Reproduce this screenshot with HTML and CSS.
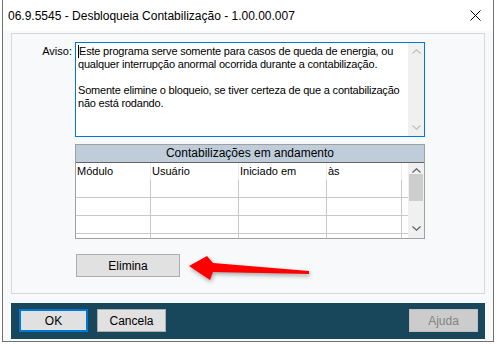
FILE: index.html
```html
<!DOCTYPE html>
<html>

<head>
	<meta charset="utf-8">
	<link rel="stylesheet" href="styles.css">
</head>

<body>

	<div class="window">
		<div class="titlebar">
			<span class="title">06.9.5545 - Desbloqueia Contabilização - 1.00.00.007</span>
			<svg class="close" width="11" height="11" viewBox="0 0 11 11">
				<path d="M0.5 0.5L10.5 10.5M10.5 0.5L0.5 10.5" />
			</svg>
		</div>

		<div class="client">
			<div class="group">
				<div class="aviso-row">
					<label class="aviso-label">Aviso:</label>
					<div class="memo">
						<div class="memo-text">
							<p><span class="caret"></span>Este programa serve somente para casos de queda de energia, ou qualquer interrupção anormal ocorrida durante a contabilização.</p>
							<p>Somente elimine o bloqueio, se tiver certeza de que a contabilização não está rodando.</p>
						</div>
						<div class="vscroll vscroll-off">
							<svg class="chev" width="9" height="5" viewBox="0 0 9 5"><path d="M0.5 4.5L4.5 0.8L8.5 4.5" /></svg>
							<svg class="chev" width="9" height="5" viewBox="0 0 9 5"><path d="M0.5 0.5L4.5 4.2L8.5 0.5" /></svg>
						</div>
					</div>
				</div>

				<div class="grid">
					<div class="grid-caption">Contabilizações em andamento</div>
					<div class="grid-body">
						<div class="grid-rows">
							<div class="grid-row grid-head">
								<div class="cell">Módulo</div>
								<div class="cell">Usuário</div>
								<div class="cell">Iniciado em</div>
								<div class="cell">às</div>
							</div>
							<div class="grid-row">
								<div class="cell"></div>
								<div class="cell"></div>
								<div class="cell"></div>
								<div class="cell"></div>
							</div>
							<div class="grid-row">
								<div class="cell"></div>
								<div class="cell"></div>
								<div class="cell"></div>
								<div class="cell"></div>
							</div>
							<div class="grid-row">
								<div class="cell"></div>
								<div class="cell"></div>
								<div class="cell"></div>
								<div class="cell"></div>
							</div>
							<div class="grid-row">
								<div class="cell"></div>
								<div class="cell"></div>
								<div class="cell"></div>
								<div class="cell"></div>
							</div>
						</div>
						<div class="vscroll">
							<svg class="chev" width="9" height="5" viewBox="0 0 9 5"><path d="M0.5 4.5L4.5 0.8L8.5 4.5" /></svg>
							<div class="thumb"></div>
							<svg class="chev chev-down" width="9" height="5" viewBox="0 0 9 5"><path d="M0.5 0.5L4.5 4.2L8.5 0.5" /></svg>
						</div>
					</div>
				</div>

				<button class="btn btn-elimina">Elimina</button>

				<!-- red pointer drawn over the dialog -->
				<svg class="pointer" width="124" height="30" viewBox="0 0 124 30">
					<polygon points="0,12 18,2 24,9 120,17 120,20 24,18 21,26" />
				</svg>
			</div>

			<div class="footer">
				<button class="btn btn-ok">OK</button>
				<button class="btn">Cancela</button>
				<button class="btn btn-off">Ajuda</button>
			</div>
		</div>
	</div>

</body>

</html>
```

FILE: styles.css
```css
body {
	margin: 0;
	background-color: #fff;
	font-family: "Liberation Sans", Arial, sans-serif;
	font-size: 11px;
	color: #000;
}

.window {
	margin-left: 2px;
	width: 490px;
	height: 341px;
	border: 1px solid #707070;
	border-top: 0;
	display: flex;
	flex-direction: column;
}

.titlebar {
	flex: 0 0 31px;
	display: flex;
	align-items: center;
	justify-content: space-between;
	padding: 0 12px 0 5px;
	background-color: #fff;
}

.title {
	font-size: 12px;
	color: #000;
}

.close path {
	stroke: #000;
	stroke-width: 1;
	fill: none;
}

.client {
	flex: 1;
	background-color: #f8f9fb;
	padding: 2px 8px 0 8px;
}

.group {
	position: relative;
	height: 251px;
	border: 1px solid #d5d8dc;
	padding: 8px 0 0 0;
}

.aviso-row {
	display: flex;
	gap: 3px;
}

.aviso-label {
	width: 60px;
	text-align: right;
	padding-top: 3px;
}

.memo {
	width: 348px;
	height: 93px;
	border: 1px solid #0078d7;
	background-color: #fff;
	display: flex;
}

.memo-text {
	flex: 1;
	padding: 2px 2px 0 2px;
	line-height: 13px;
	letter-spacing: -0.2px;
}

.memo-text p {
	margin: 0 0 13px 0;
}

.caret {
	display: inline-block;
	width: 1px;
	height: 13px;
	vertical-align: top;
	background-color: #000;
}

.vscroll {
	width: 16px;
	background-color: #f0f0f0;
	display: flex;
	flex-direction: column;
	align-items: center;
	justify-content: space-between;
	padding: 6px 0 6px 0;
	box-sizing: border-box;
}

.chev path {
	stroke: #606060;
	stroke-width: 1.2;
	fill: none;
}

.vscroll-off .chev path {
	stroke: #bfbfbf;
}

.grid {
	margin: 7px 0 0 63px;
	width: 348px;
	border: 1px solid #a0a0a0;
	background-color: #fff;
}

.grid-caption {
	height: 17px;
	line-height: 17px;
	background-color: #bfcddb;
	border-bottom: 1px solid #646464;
	text-align: center;
	font-size: 12px;
}

.grid-body {
	height: 75px;
	display: flex;
	overflow: hidden;
}

.grid-rows {
	width: 332px;
}

.grid-row {
	display: grid;
	grid-template-columns: 75px 88px 88px 75px;
	height: 17px;
	border-bottom: 1px solid #c8c8c8;
}

.grid-head {
	height: 17px;
	border-bottom: 0;
	line-height: 16px;
}

.cell {
	border-right: 1px solid #c8c8c8;
	padding-left: 1px;
}

.grid-head .cell {
	border-right-color: #ececec;
}

.grid-body .vscroll {
	padding: 5px 0 7px 0;
}

.thumb {
	width: 14px;
	height: 27px;
	margin-top: 1px;
	background-color: #cdcdcd;
	flex: 0 0 auto;
}

.chev-down {
	margin-top: auto;
}

.btn {
	font-family: "Liberation Sans", Arial, sans-serif;
	font-size: 12px;
	color: #000;
	background-color: #e1e1e1;
	border: 1px solid #adadad;
	height: 23px;
	width: 69px;
	padding: 0;
	margin: 0;
}

.btn-elimina {
	display: block;
	margin: 15px 0 0 64px;
	width: 104px;
}

.pointer {
	position: absolute;
	left: 177px;
	top: 220px;
	filter: drop-shadow(1px 2px 2px rgba(0, 0, 0, .35));
}

.pointer polygon {
	fill: #ff0000;
}

.footer {
	margin-top: 9px;
	height: 36px;
	background-color: #18465a;
	display: flex;
	align-items: flex-start;
	gap: 9px;
	padding: 6px 7px 0 8px;
	box-sizing: border-box;
}

.btn-ok {
	border: 2px solid #0078d7;
}

.btn-off {
	margin-left: auto;
	background-color: #cccccc;
	border-color: #bfbfbf;
	color: #838383;
}
```
